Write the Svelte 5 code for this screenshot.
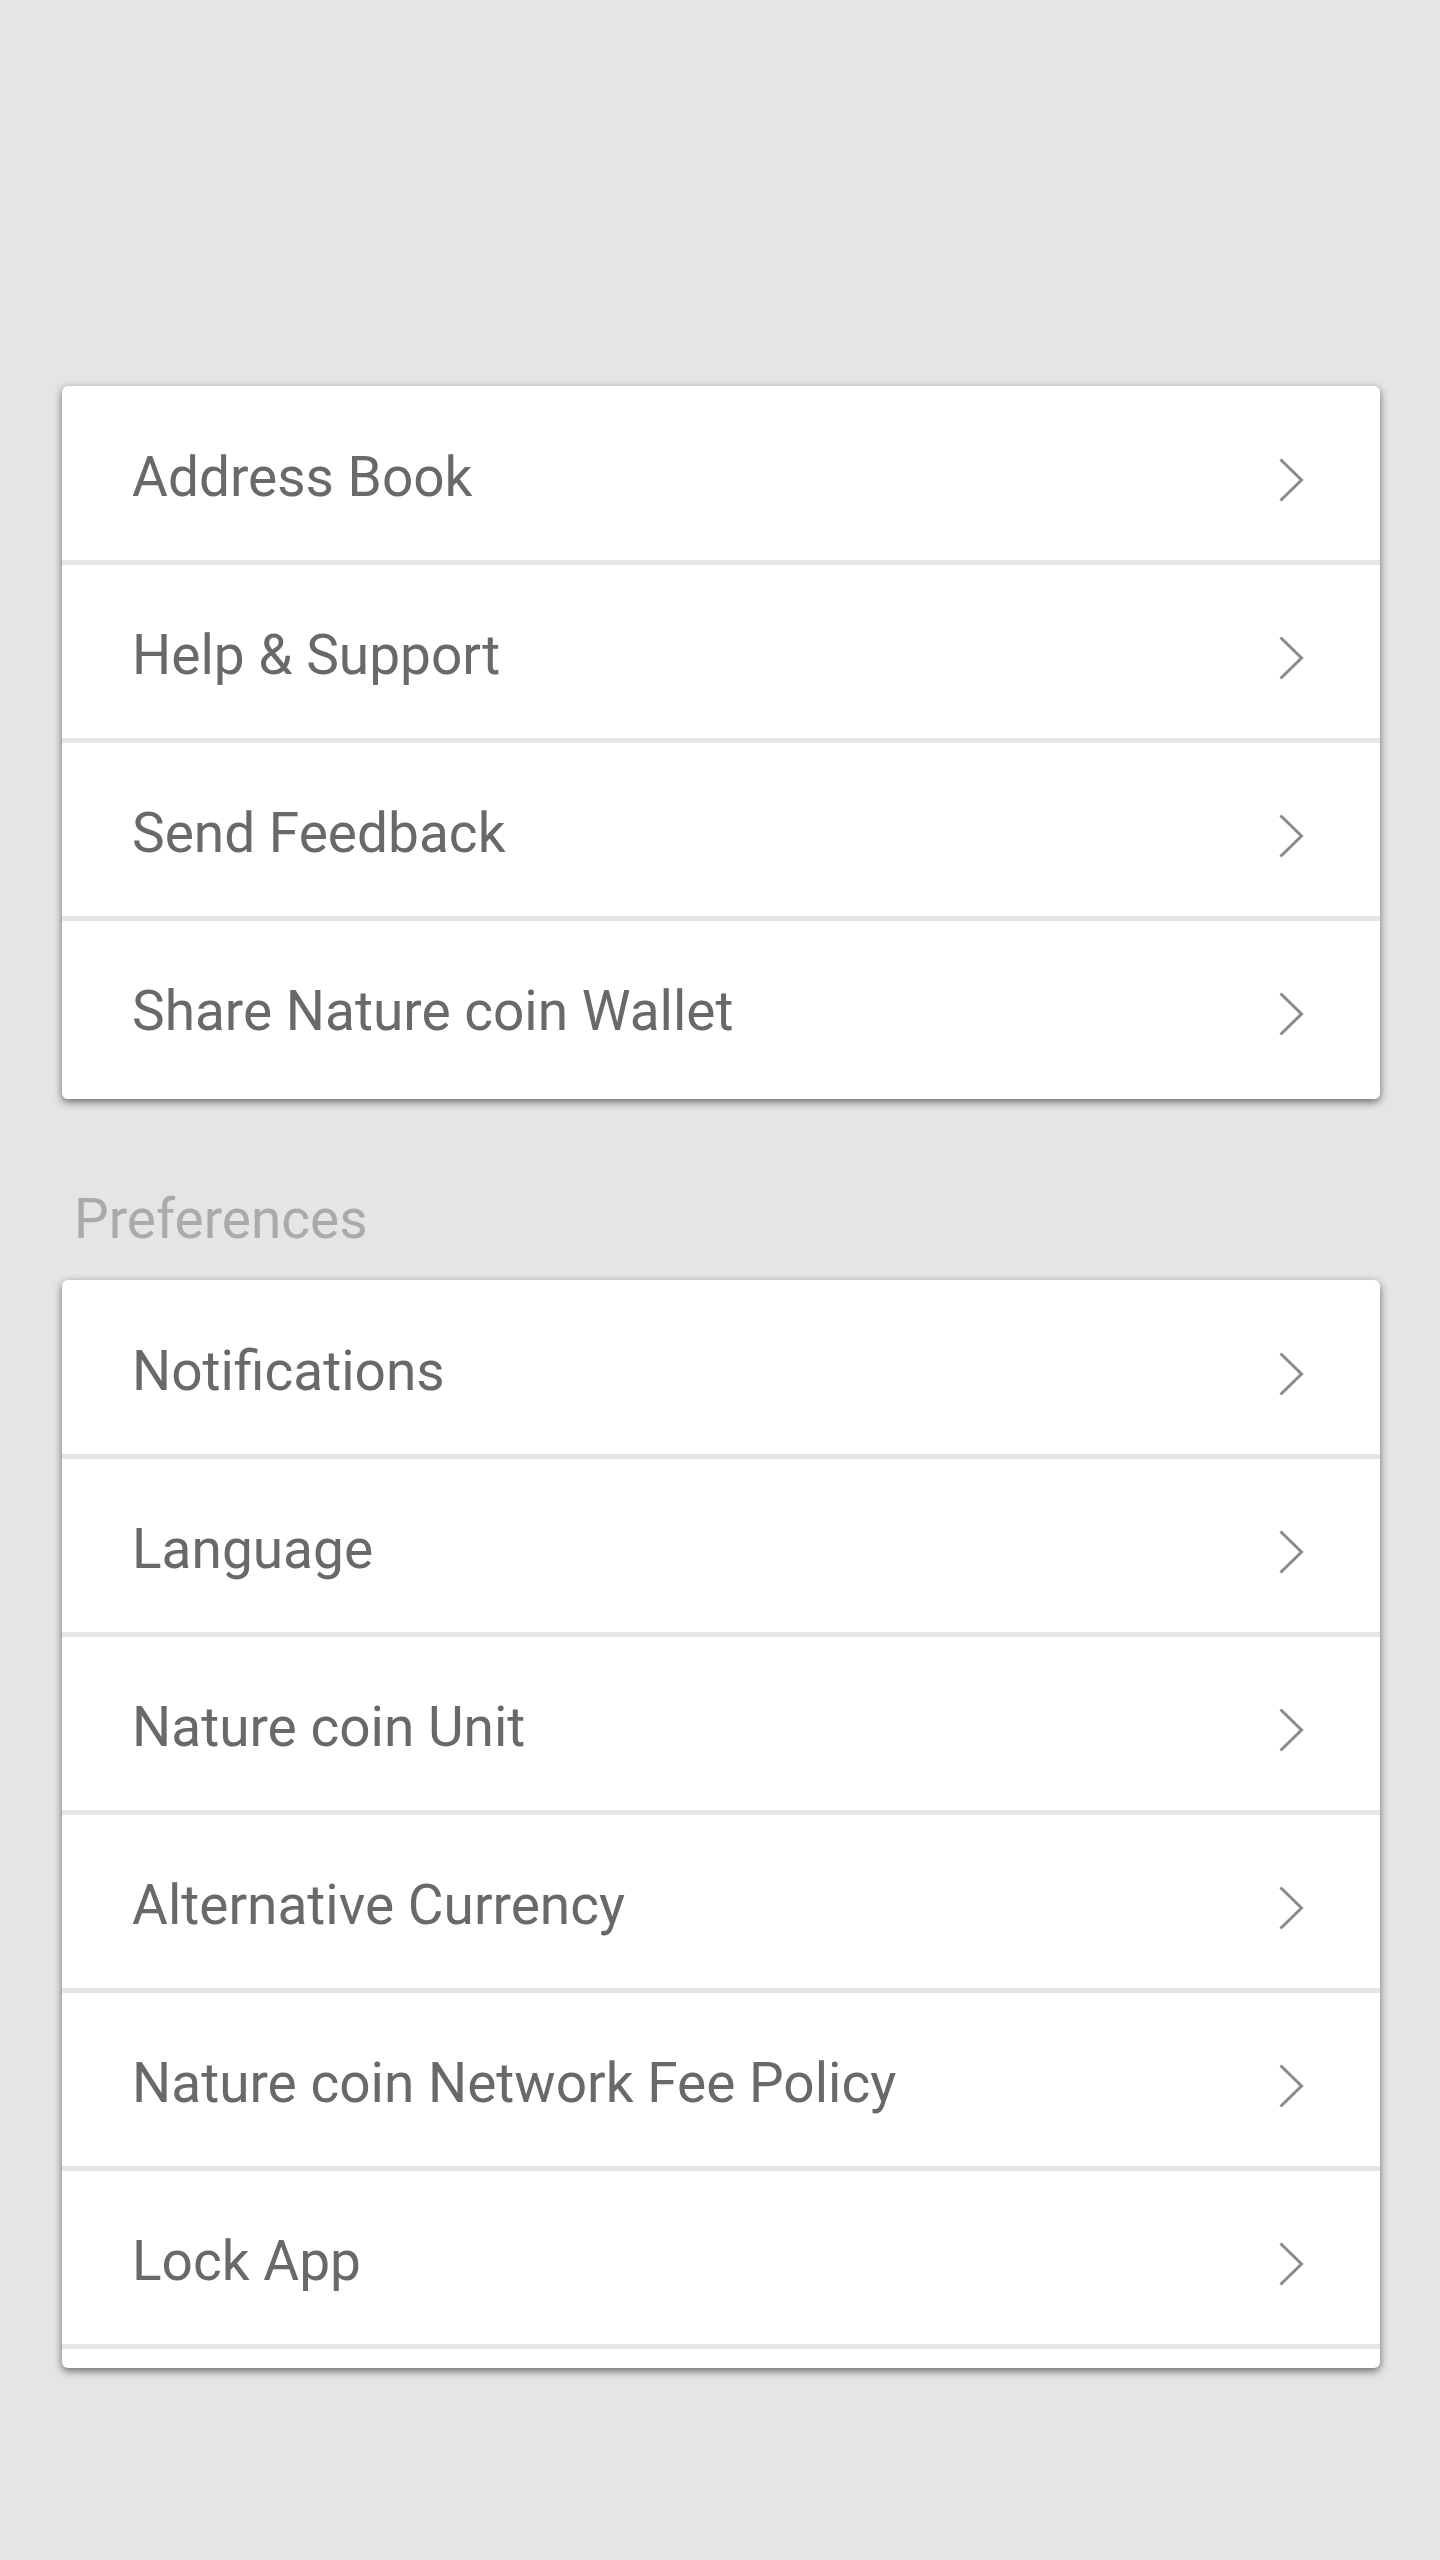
<script>
  const general = ['Address Book', 'Help & Support', 'Send Feedback', 'Share Nature coin Wallet'];
  const preferences = ['Notifications', 'Language', 'Nature coin Unit', 'Alternative Currency', 'Nature coin Network Fee Policy', 'Lock App'];
</script>

{#snippet row(label)}
  <li>
    <button type="button">
      <span>{label}</span>
      <svg viewBox="0 0 26 44" aria-hidden="true"><path d="M2.5 1.5 L23.5 22 L2.5 42.5" /></svg>
    </button>
  </li>
{/snippet}

<main>
  <ul class="card">
    {#each general as label}{@render row(label)}{/each}
  </ul>
  <h2>Preferences</h2>
  <ul class="card clipped">
    {#each preferences as label}{@render row(label)}{/each}
  </ul>
</main>

<style>
  :global(body) { margin: 0; background: #e5e5e5; }
  main {
    box-sizing: border-box;
    min-height: 100vh;
    padding: 386px 60px 190px 62px;
    font-family: Roboto, sans-serif;
    font-size: 55px;
    color: #696969;
  }
  .card {
    list-style: none;
    margin: 0;
    padding: 1px 0 0;
    background: #fff;
    border-radius: 6px;
    box-shadow: 0 3px 8px rgba(0, 0, 0, 0.55);
    overflow: hidden;
  }
  li { border-bottom: 5px solid #e5e5e5; }
  .card:not(.clipped) li:last-child { border-bottom-color: #fff; }
  .clipped { padding-bottom: 19px; }
  button {
    display: flex;
    align-items: center;
    justify-content: space-between;
    box-sizing: border-box;
    width: 100%;
    height: 173px;
    padding: 13px 76px 0 70px;
    border: 0;
    background: none;
    font: inherit;
    color: inherit;
    text-align: left;
    cursor: pointer;
  }
  span { padding-bottom: 6px; }
  svg {
    flex: none;
    width: 26px;
    height: 44px;
    fill: none;
    stroke: #8c898c;
    stroke-width: 3;
  }
  h2 {
    margin: 0;
    padding: 84px 12px 25px;
    font-size: 55px;
    line-height: 72px;
    font-weight: 400;
    color: #aaa;
  }
</style>
